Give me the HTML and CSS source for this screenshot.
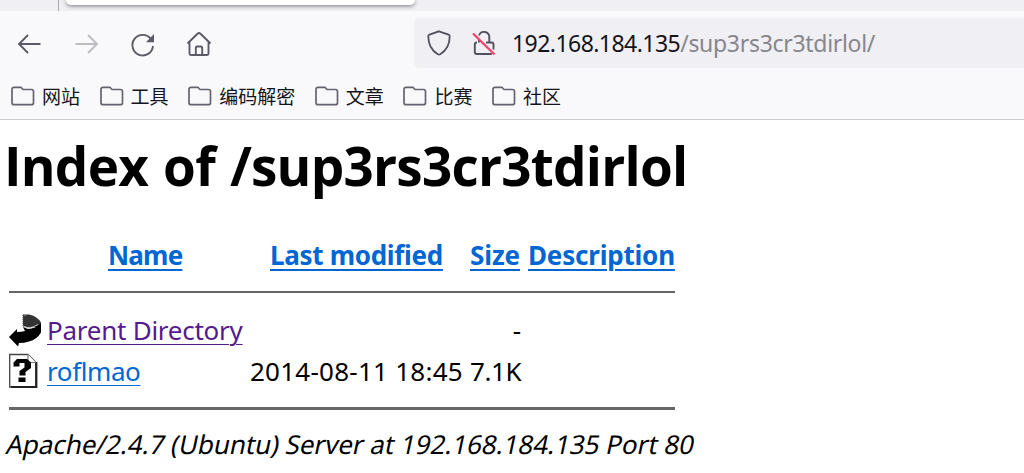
FILE: index.html
```html
<!DOCTYPE html>
<html lang="zh-CN">
<head>
<meta charset="utf-8">
<title>Index of /sup3rs3cr3tdirlol</title>
<link rel="stylesheet" href="styles.css">
</head>
<body>
<svg width="0" height="0" class="defs">
  <symbol id="folder" viewBox="0 0 26 22"><path d="M3 4.500v13.200q0 2 2 2H22.500q2 0 2-2V6.500q0-2-2-2H14l-2-2.200H5q-2 0-2 2.200z" fill="none" stroke="#65656f" stroke-width="1.700"/></symbol>
</svg>
<div class="tabs"><div class="tab-prev"></div><div class="tab-active"></div></div>
<div class="toolbar">
  <div class="nav">
    <svg class="icon" width="28" height="28" viewBox="0 0 28 28"><path d="M25.500 14H4.500M13 5L4 14l9 9" fill="none" stroke="#5b5b66" stroke-width="1.900"/></svg>
    <svg class="icon" width="28" height="28" viewBox="0 0 28 28"><path d="M3.500 14h21M16 5l9 9-9 9" fill="none" stroke="#bcbcc1" stroke-width="1.900"/></svg>
    <svg class="icon" width="28" height="28" viewBox="0 0 28 28"><path d="M23 9A10.300 10.300 0 1 0 25 16" fill="none" stroke="#5b5b66" stroke-width="1.900"/><path d="M26 4v8.300h-8z" fill="#5b5b66"/></svg>
    <svg class="icon" width="28" height="28" viewBox="0 0 28 28"><path d="M2.500 13.500L12.500 3.700q1.500-1.200 3 0l10 9.800M4.500 12.500v11q0 1.500 1.500 1.500h16q1.500 0 1.500-1.500v-11M10.800 25v-7q0-1.500 1.500-1.500h3.400q1.500 0 1.500 1.500v7" fill="none" stroke="#5b5b66" stroke-width="1.900" stroke-linejoin="round"/></svg>
  </div>
  <div class="urlbar">
    <svg class="icon" width="28" height="28" viewBox="0 0 28 28"><path d="M14 2.300l9.500 3.300q1.200.5 1.200 1.700c0 8-2.700 14-9.500 17.900q-1.200.700-2.400 0C6 21.300 3.300 15.300 3.300 7.300q0-1.200 1.200-1.700z" fill="none" stroke="#52525e" stroke-width="1.800"/></svg>
    <svg class="icon" width="28" height="28" viewBox="0 0 28 28"><path d="M9 6.500a5.300 5.300 0 0 1 10.300 2V13M9 10v3.500M16 13.500h5.500q2 0 2 2v5M7 13.500q-2.200 0-2.200 2V23q0 2 2 2h15" fill="none" stroke="#52525e" stroke-width="1.900"/><path d="M3 4.500l21.500 21" stroke="#f7406a" stroke-width="2.300"/></svg>
    <div class="url"><span class="host">192.168.184.135</span><span class="path">/sup3rs3cr3tdirlol/</span></div>
  </div>
</div>
<div class="bookmarks">
  <div class="bm"><svg width="26" height="22"><use href="#folder"/></svg><span>网站</span></div>
  <div class="bm"><svg width="26" height="22"><use href="#folder"/></svg><span>工具</span></div>
  <div class="bm"><svg width="26" height="22"><use href="#folder"/></svg><span>编码解密</span></div>
  <div class="bm"><svg width="26" height="22"><use href="#folder"/></svg><span>文章</span></div>
  <div class="bm"><svg width="26" height="22"><use href="#folder"/></svg><span>比赛</span></div>
  <div class="bm"><svg width="26" height="22"><use href="#folder"/></svg><span>社区</span></div>
</div>
<main class="page">
  <h1>Index of /sup3rs3cr3tdirlol</h1>
  <div class="listing">
    <div class="row head">
      <span></span><a class="c-name">Name</a><a class="c-mod">Last modified</a><a class="c-size">Size</a><a class="c-desc">Description</a>
    </div>
    <div class="rule"></div>
    <div class="row parent">
      <svg width="32" height="34" viewBox="0 0 32 34"><path d="M14 1.500h6q8 1.500 12 8v5l-7-.5H14z" fill="#333"/><path d="M13.500 2v12M16 2v2" stroke="#999" stroke-width="1.200" stroke-dasharray="1 1"/><path d="M14 13l5 1.800q5 0 10-3.300" fill="none" stroke="#bbb"/><path d="M14 14l5 2q7-.5 13-5.500v9q-4 7-12 9-5 1.500-10 1.500l-1 3.500L0 24l8-8v3q5 0 8-1z" fill="#000"/></svg>
      <a class="visited">Parent Directory</a><span></span><span class="dash">-</span>
    </div>
    <div class="row file">
      <svg width="30" height="36" viewBox="0 0 30 36"><path d="M.7 1.500H19l8 8V34H.7z" fill="#fff" stroke="#444" stroke-width="1.300"/><path d="M27.300 9v25H2" fill="none" stroke="#222" stroke-width="2.200"/><path d="M19 1.500v8h8" fill="#fff" stroke="#777" stroke-width="1.200"/><path d="M4.500 13.500V9.500L8 6h10l4 3.500v5.500l-5.500 4v3.500h-6v-4.500l5-3.500V10h-5v3.500z" fill="#000"/><path d="M9.500 24.500h7v4.500h-7z" fill="#000"/></svg>
      <a class="link">roflmao</a><span class="date">2014-08-11 18:45</span><span class="size">7.1K</span>
    </div>
    <div class="rule thick"></div>
  </div>
  <address>Apache/2.4.7 (Ubuntu) Server at 192.168.184.135 Port 80</address>
</main>
</body>
</html>
```
FILE: styles.css
```css
* { box-sizing: border-box; }
body { margin: 0; width: 1024px; height: 473px; overflow: hidden; background: #fff; color: #000; font-family: "Noto Sans", "Noto Sans CJK SC", sans-serif; }
.defs { display: block; height: 0; }
svg { flex: none; }
.tabs { display: flex; height: 11px; background: #f0eff4; overflow: hidden; }
.tab-prev { width: 59px; border-right: 1px solid #aaaab0; }
.tab-active { width: 349px; height: 5px; margin-left: 7px; background: #fff; border-radius: 0 0 5px 5px; box-shadow: 0 1px 4px rgba(0,0,0,.5); }
.toolbar { display: flex; height: 60px; padding-top: 7px; background: #f9f9fb; }
.nav { display: flex; width: 414px; padding: 12px 0 0 15px; gap: 28.500px; }
.urlbar { display: flex; align-items: center; width: 610px; height: 50px; padding-left: 11px; gap: 17px; background: #f0f0f4; border-radius: 5px 0 0 5px; }
.url { margin-left: -3px; font-size: 23px; line-height: 50px; white-space: nowrap; color: #15141a; }
.host { letter-spacing: -.55px; }
.path { color: #87868d; letter-spacing: -.3px; }
.bookmarks { display: flex; height: 49px; padding-left: 9px; background: #f9f9fb; border-bottom: 1px solid #ccc; gap: 18.600px; align-items: center; }
.bm { display: flex; align-items: center; gap: 6px; font: 19px/24px "Noto Sans CJK SC", sans-serif; color: #15141a; height: 24px; white-space: nowrap; padding-top: 2px; }
.bm span { margin-left: 1px; margin-right: -1px; }
.page { padding-left: 6px; }
h1 { margin: 0 0 0 -2px; padding-top: 16px; font-family: "Open Sans", sans-serif; font-size: 53px; line-height: 60px; height: 107px; letter-spacing: -.76px; word-spacing: 2px; white-space: nowrap; }
.listing { width: 669px; padding-left: 3px; font-size: 26px; line-height: 40px; }
.row { display: grid; grid-template-columns: 38px 203px 220px 58px 147px; height: 40px; white-space: nowrap; align-items: center; }
.head { height: 56px; font-weight: 700; color: #0066d4; }
.row a { text-decoration: underline; text-decoration-thickness: 2px; text-underline-offset: 4px; }
.head a { justify-self: start; letter-spacing: -.3px; }
.row .c-name { margin-left: 61px; letter-spacing: -.8px; }
.row .c-mod { margin-left: 20px; }
.row .c-size { letter-spacing: -.1px; }
.row .c-desc { letter-spacing: -.2px; }
.rule { height: 2px; margin-top: 8px; background: #666; }
.parent { margin-top: 17px; }
.visited { color: #551a8b; letter-spacing: -.25px; }
.link { color: #0066d4; letter-spacing: -.4px; }
.row .visited, .row .link { justify-self: start; text-decoration-thickness: 1px; }
.date { letter-spacing: .25px; }
.size { letter-spacing: -.4px; }
.dash { justify-self: end; margin-right: 7px; }
.file { height: 41px; }
.thick { height: 3px; margin-top: 16px; }
address { width: max-content; height: 54px; margin: 14px 0 0 -1px; font-size: 26px; line-height: 40px; font-style: normal; letter-spacing: -.05px; white-space: nowrap; transform: skewX(-12deg); transform-origin: 0 30px; }
```
